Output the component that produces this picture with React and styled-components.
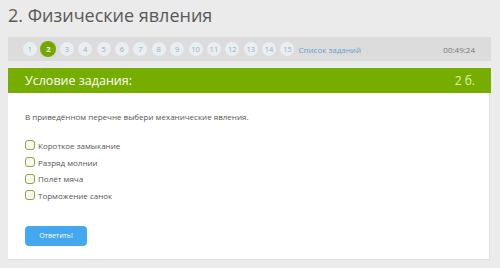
import React from "react";
import styled, { createGlobalStyle } from "styled-components";

const Global = createGlobalStyle`
  html, body { margin: 0; padding: 0; background: #ebebeb; }
  body { font-family: "Open Sans", "Noto Sans", sans-serif; }
`;

const Page = styled.div`
  padding: 0 9px 0 8px;
  width: 500px;
  box-sizing: border-box;
`;

const Title = styled.h1`
  margin: 0;
  height: 37px;
  font-size: 18px;
  line-height: 30px;
  font-weight: 400;
  color: #595959;
`;

const Nav = styled.div`
  display: flex;
  align-items: center;
  height: 24px;
  background: #dcdcdc;
  padding: 0 13px 0 15px;
`;

const Pages = styled.div`
  display: flex;
  align-items: center;
  gap: 4.4px;
`;

const Num = styled.span`
  width: ${(p) => (p.$active ? 16 : 14)}px;
  height: ${(p) => (p.$active ? 16 : 14)}px;
  margin: ${(p) => (p.$active ? "0 -1px" : "0")};
  border-radius: 50%;
  background: ${(p) => (p.$active ? "#72a800" : "#e9eef1")};
  color: ${(p) => (p.$active ? "#ffffff" : "#8fb0c8")};
  font-size: 7.5px;
  font-weight: ${(p) => (p.$active ? 700 : 400)};
  display: flex;
  align-items: center;
  justify-content: center;
`;

const ListLink = styled.span`
  margin-left: 4px;
  font-size: 8px;
  color: #6a9fcf;
`;

const Timer = styled.span`
  margin-left: auto;
  font-size: 8px;
  color: #777;
  margin-right: 3px;
`;

const Card = styled.div`
  margin-top: 7px;
  background: #fff;
  width: 482px;
`;

const CardHead = styled.div`
  display: flex;
  align-items: center;
  justify-content: space-between;
  height: 25px;
  background: #75ad00;
  padding: 0 16px 0 17px;
  width: 483px;
  box-sizing: border-box;
`;

const HeadTitle = styled.span`
  color: #fff;
  font-size: 12.5px;
`;

const Points = styled.span`
  color: #e3f3a6;
  font-size: 12px;
`;

const Body = styled.div`
  padding: 18px 17px 16px;
  height: 167px;
  box-sizing: border-box;
  border-right: 1px solid #e0e0e0;
  border-bottom: 1px solid #dcdcdc;
`;

const Question = styled.p`
  margin: 0 0 17px;
  font-size: 8px;
  color: #555;
`;

const Options = styled.div`
  display: flex;
  flex-direction: column;
  gap: 4px;
`;

const Option = styled.label`
  display: flex;
  align-items: center;
  gap: 3px;
  height: 12.7px;
  font-size: 8px;
  color: #555;
`;

const Box = styled.span`
  width: 8px;
  height: 8px;
  border: 1.5px solid #93a23a;
  border-radius: 3px;
  background: #f8f8f0;
`;

const Button = styled.button`
  margin-top: 24px;
  width: 62px;
  height: 20px;
  border: none;
  border-radius: 4px;
  background: #44a8ee;
  color: #fff;
  font-family: inherit;
  font-size: 7px;
  padding: 0;
`;

const options = ["Короткое замыкание", "Разряд молнии", "Полёт мяча", "Торможение санок"];

export default function App() {
  return (
    <Page>
      <Global />
      <Title>2. Физические явления</Title>
      <Nav>
        <Pages>
          {Array.from({ length: 15 }, (_, i) => (
            <Num key={i} $active={i === 1}>{i + 1}</Num>
          ))}
        </Pages>
        <ListLink>Список заданий</ListLink>
        <Timer>00:49:24</Timer>
      </Nav>
      <Card>
        <CardHead>
          <HeadTitle>Условие задания:</HeadTitle>
          <Points>2 б.</Points>
        </CardHead>
        <Body>
          <Question>В приведённом перечне выбери механические явления.</Question>
          <Options>
            {options.map((o) => (
              <Option key={o}>
                <Box />
                {o}
              </Option>
            ))}
          </Options>
          <Button>Ответить!</Button>
        </Body>
      </Card>
    </Page>
  );
}
